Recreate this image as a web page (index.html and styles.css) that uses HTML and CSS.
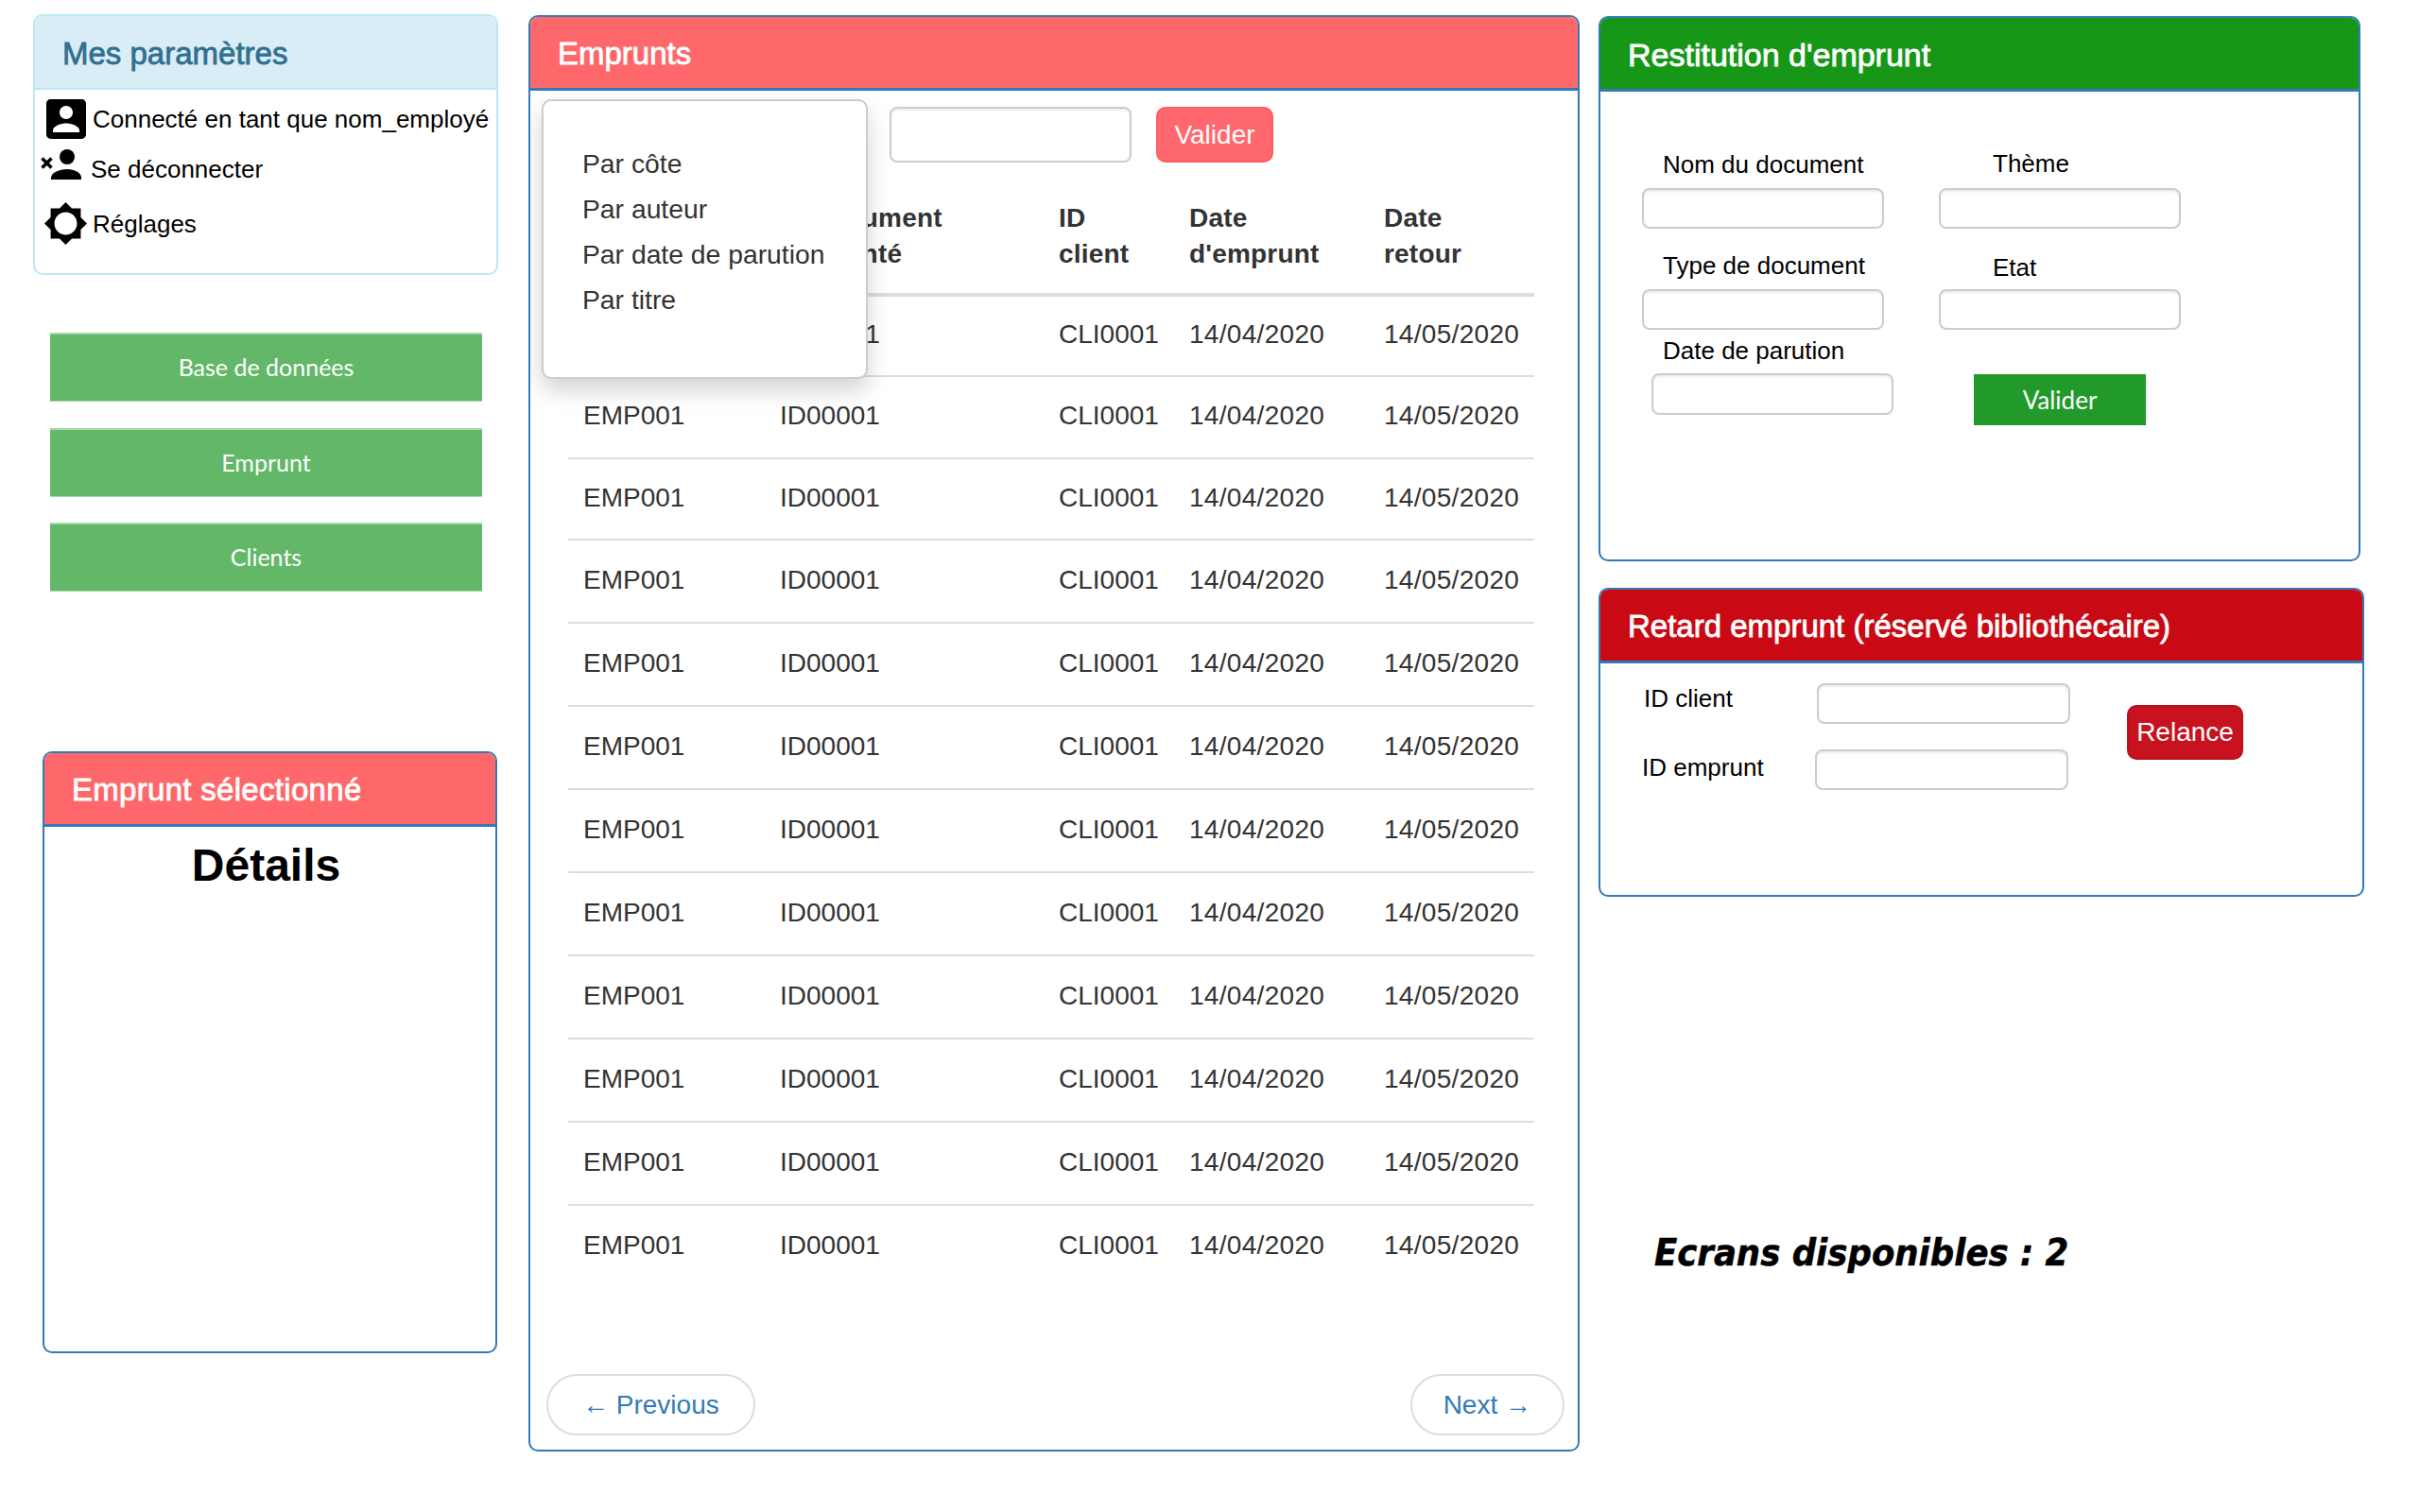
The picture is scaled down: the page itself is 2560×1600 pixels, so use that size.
FILE: index.html
```html
<!DOCTYPE html>
<html lang="fr">
<head>
<meta charset="utf-8">
<title>Emprunts</title>
<link rel="stylesheet" href="styles.css">
</head>
<body>
<div class="page">
  <aside class="col-left">
    <section class="params">
      <h2 class="params-title">Mes paramètres</h2>
      <div class="params-row row-user">
        <svg class="ic-user" viewBox="3 3 18 18" preserveAspectRatio="none"><path d="M3 5v14c0 1.1.89 2 2 2h14c1.1 0 2-.9 2-2V5c0-1.1-.9-2-2-2H5c-1.11 0-2 .9-2 2zm12 4c0 1.66-1.34 3-3 3s-3-1.34-3-3 1.34-3 3-3 3 1.34 3 3zm-9 8c0-2 4-3.1 6-3.1s6 1.1 6 3.1v1H6v-1z"/></svg>
        <span>Connecté en tant que nom_employé</span>
      </div>
      <div class="params-row row-logout">
        <svg class="ic-logout" viewBox="0 0 43 32"><circle cx="28" cy="8" r="8"/><path d="M11 32v-2c0-6 11-9 17-9s15 3 15 9v2z"/><path class="ic-x" d="M1.500 9.500l10 10M11.500 9.500l-10 10"/></svg>
        <span>Se déconnecter</span>
      </div>
      <div class="params-row row-settings">
        <svg class="ic-settings" viewBox="0.690 0.690 22.620 22.620"><path d="M20 15.310L23.310 12 20 8.690V4h-4.690L12 .69 8.690 4H4v4.690L.69 12 4 15.310V20h4.690L12 23.310 15.310 20H20v-4.690zM12 18c-3.310 0-6-2.690-6-6s2.690-6 6-6 6 2.690 6 6-2.690 6-6 6z"/></svg>
        <span>Réglages</span>
      </div>
    </section>
    <nav class="side-nav">
      <a class="nav-btn">Base de données</a>
      <a class="nav-btn">Emprunt</a>
      <a class="nav-btn">Clients</a>
    </nav>
    <section class="panel panel-detail">
      <h2 class="panel-heading head-coral head-detail">Emprunt sélectionné</h2>
      <h3 class="detail-title">Détails</h3>
    </section>
  </aside>

  <main class="panel panel-main">
    <h2 class="panel-heading head-coral">Emprunts</h2>
    <ul class="sort-menu">
      <li>Par côte</li>
      <li>Par auteur</li>
      <li>Par date de parution</li>
      <li>Par titre</li>
    </ul>
    <form class="search-row">
      <input class="input search-input" type="text">
      <button class="btn btn-coral" type="button">Valider</button>
    </form>
    <table class="loans">
      <colgroup><col class="c1"><col class="c2"><col class="c3"><col class="c4"><col class="c5"></colgroup>
      <thead>
        <tr><th>ID<br>emprunt</th><th>ID document<br>emprunté</th><th>ID<br>client</th><th>Date<br>d'emprunt</th><th>Date<br>retour</th></tr>
      </thead>
      <tbody>
        <tr><td>EMP001</td><td>ID00001</td><td>CLI0001</td><td>14/04/2020</td><td>14/05/2020</td></tr>
        <tr><td>EMP001</td><td>ID00001</td><td>CLI0001</td><td>14/04/2020</td><td>14/05/2020</td></tr>
        <tr><td>EMP001</td><td>ID00001</td><td>CLI0001</td><td>14/04/2020</td><td>14/05/2020</td></tr>
        <tr><td>EMP001</td><td>ID00001</td><td>CLI0001</td><td>14/04/2020</td><td>14/05/2020</td></tr>
        <tr><td>EMP001</td><td>ID00001</td><td>CLI0001</td><td>14/04/2020</td><td>14/05/2020</td></tr>
        <tr><td>EMP001</td><td>ID00001</td><td>CLI0001</td><td>14/04/2020</td><td>14/05/2020</td></tr>
        <tr><td>EMP001</td><td>ID00001</td><td>CLI0001</td><td>14/04/2020</td><td>14/05/2020</td></tr>
        <tr><td>EMP001</td><td>ID00001</td><td>CLI0001</td><td>14/04/2020</td><td>14/05/2020</td></tr>
        <tr><td>EMP001</td><td>ID00001</td><td>CLI0001</td><td>14/04/2020</td><td>14/05/2020</td></tr>
        <tr><td>EMP001</td><td>ID00001</td><td>CLI0001</td><td>14/04/2020</td><td>14/05/2020</td></tr>
        <tr><td>EMP001</td><td>ID00001</td><td>CLI0001</td><td>14/04/2020</td><td>14/05/2020</td></tr>
        <tr><td>EMP001</td><td>ID00001</td><td>CLI0001</td><td>14/04/2020</td><td>14/05/2020</td></tr>
      </tbody>
    </table>
    <div class="pager">
      <a class="pager-link pager-prev">← Previous</a>
      <a class="pager-link pager-next">Next →</a>
    </div>
  </main>

  <aside class="col-right">
    <section class="panel panel-return">
      <h2 class="panel-heading head-green">Restitution d'emprunt</h2>
      <form class="return-form">
        <div class="field f-name"><label>Nom du document</label><input class="input" type="text"></div>
        <div class="field f-theme"><label>Thème</label><input class="input" type="text"></div>
        <div class="field f-type"><label>Type de document</label><input class="input" type="text"></div>
        <div class="field f-state"><label>Etat</label><input class="input" type="text"></div>
        <div class="field f-date"><label>Date de parution</label><input class="input" type="text"></div>
        <button class="green-btn" type="button">Valider</button>
      </form>
    </section>
    <section class="panel panel-late">
      <h2 class="panel-heading head-red">Retard emprunt (réservé bibliothécaire)</h2>
      <form class="late-form">
        <div class="late-fields">
          <div class="late-row"><label>ID client</label><input class="input" type="text"></div>
          <div class="late-row late-row-2"><label>ID emprunt</label><input class="input" type="text"></div>
        </div>
        <button class="btn btn-red" type="button">Relance</button>
      </form>
    </section>
    <p class="screens">Ecrans disponibles : 2</p>
  </aside>
</div>
</body>
</html>
```

FILE: styles.css
```css
* { box-sizing: border-box; }
html, body { margin: 0; padding: 0; background: #fff; }
body { font-family: "Liberation Sans", Arial, sans-serif; color: #000; }
h2, h3, p, ul { margin: 0; padding: 0; }

.page { display: flex; align-items: flex-start; width: 2560px; height: 1600px; padding: 15px 0 0 35px; overflow: hidden; }
.col-left { width: 492px; flex: none; display: flex; flex-direction: column; }
.col-right { width: 810px; flex: none; margin: 2px 0 0 20px; display: flex; flex-direction: column; }

/* Settings */
.params { height: 276px; border: 2px solid #bce8f1; border-radius: 10px; overflow: hidden; }
.params-title { height: 78px; padding: 0 29px; background: #d9edf7; border-bottom: 2px solid #bce8f1; color: #31708f; font-size: 33px; font-weight: 400; line-height: 79px; -webkit-text-stroke: .8px #31708f; }
.params-row { display: flex; align-items: center; font-size: 26px; line-height: 30px; }
.row-user { height: 42px; margin: 10px 0 0 12px; gap: 7px; }
.row-logout { height: 32px; margin: 11px 0 0 6px; gap: 10px; }
.row-logout span { position: relative; top: 5px; }
.row-settings { height: 45px; margin: 24px 0 0 10px; gap: 6px; }
.ic-user { width: 42px; height: 42px; flex: none; }
.ic-logout { width: 43px; height: 32px; flex: none; }
.ic-x { fill: none; stroke: #000; stroke-width: 3.500; }
.ic-settings { width: 45px; height: 45px; flex: none; }

/* Side navigation */
.side-nav { margin: 61px 0 0 18px; display: flex; flex-direction: column; }
.nav-btn { display: block; width: 457px; height: 73px; background: #62b868; border-top: 2px solid #a6d8aa; border-bottom: 1px solid #a6d8aa; color: #fff; font-family: Lato, sans-serif; font-size: 25px; line-height: 69px; text-align: center; }
.nav-btn + .nav-btn { margin-top: 28px; }
.nav-btn:last-child { margin-top: 27px; }

/* Panels */
.panel { background: #fff; border: 2px solid #337ab7; border-radius: 10px; overflow: hidden; }
.panel-heading { height: 78px; padding: 0 29px; border-bottom: 3px solid #337ab7; color: #fff; font-size: 33px; font-weight: 400; line-height: 78px; -webkit-text-stroke: .8px #fff; white-space: nowrap; }
.head-coral { background: #ff686b; }
.head-detail { letter-spacing: .3px; }
.head-green { background: #169718; font-size: 34px; }
.head-red { background: #c90913; }
.panel-detail { width: 481px; height: 637px; margin: 169px 0 0 10px; }
.detail-title { margin-top: 11px; padding-right: 8px; font-size: 48px; line-height: 60px; text-align: center; font-weight: 700; }

/* Main panel */
.panel-main { position: relative; flex: none; width: 1112px; height: 1520px; margin: 1px 0 0 32px; }
.search-row { display: flex; height: 59px; margin-top: 17px; padding-left: 380px; gap: 26px; }
.input { display: block; height: 43px; padding: 0; background: #fff; border: 2px solid #ccc; border-radius: 8px; box-shadow: inset 0 2px 2px rgba(0,0,0,.075); }
.search-input { width: 256px; height: 59px; }
.btn { border-radius: 10px; color: #fff; font-family: "Liberation Sans", Arial, sans-serif; font-size: 28px; padding: 0; }
.btn-coral { width: 124px; height: 59px; background: #ff686e; border: 2px solid #ff5a60; }
.btn-red { width: 123px; height: 58px; margin: 23px 0 0 56px; background: #c81220; border: 2px solid #bb0f1c; }

.sort-menu { position: absolute; left: 12px; top: 87px; z-index: 2; width: 345px; height: 296px; padding: 42px 0 0 41px; background: #fff; border: 2px solid #ccc; border-radius: 10px; box-shadow: 0 12px 24px rgba(0,0,0,.175); list-style: none; color: #333; font-size: 28.300px; line-height: 48px; }

.loans { width: 1022px; margin: 19px 0 0 40px; border-collapse: collapse; table-layout: fixed; color: #333; font-size: 28px; }
.c1 { width: 208px; } .c2 { width: 295px; } .c3 { width: 138px; } .c4 { width: 206px; } .c5 { width: 175px; }
.loans th { padding: 21px 16px 22px; border-bottom: 4px solid #ddd; font-weight: 700; letter-spacing: .2px; line-height: 38px; text-align: left; }
.loans td { height: 88px; padding: 0 16px 3px; border-top: 2px solid #ddd; line-height: 40px; white-space: nowrap; }
.loans td:nth-child(n+4) { letter-spacing: .3px; }
.loans tbody tr:first-child td { height: 86px; border-top: 0; }
.loans tbody tr:nth-child(2) td { height: 87px; }
.loans tbody tr:nth-child(3) td { height: 86px; }

.pager { display: flex; justify-content: space-between; margin-top: 91px; padding: 0 14px 0 17px; }
.pager-link { display: block; height: 65px; padding: 0 36px; background: #fff; border: 2px solid #ddd; border-radius: 33px; color: #337ab7; font-size: 28px; line-height: 61px; }
.pager-next { padding: 0 33px; }

/* Restitution */
.panel-return { width: 806px; height: 577px; }
.return-form { display: grid; grid-template-columns: 314px 1fr; padding: 61px 0 0 44px; }
.field label { display: block; height: 30px; font-size: 26px; line-height: 30px; }
.field .input { width: 256px; }
.f-name label { margin: 1px 0 10px 22px; }
.f-theme label { margin: 0 0 11px 57px; }
.f-type { margin-top: 24px; }
.f-type label { margin: 0 0 10px 22px; }
.f-state { margin-top: 26px; }
.f-state label { margin: 0 0 8px 57px; }
.f-date { margin: 7px 0 0 10px; }
.f-date label { margin: 0 0 9px 12px; }
.f-date .input { height: 44px; }
.green-btn { align-self: start; width: 182px; height: 54px; margin: 47px 0 0 37px; padding: 0; background: #229a2a; border: 0; color: #fff; font-family: Lato, sans-serif; font-size: 26px; }

/* Retard */
.panel-late { margin-top: 28px; height: 327px; }
.late-form { display: flex; align-items: flex-start; padding: 21px 0 0 46px; }
.late-row { display: flex; width: 455px; font-size: 26px; line-height: 30px; }
.late-row label { width: 183px; flex: none; padding-top: 1px; }
.late-row .input { width: 268px; }
.late-row-2 { margin: 27px 0 0 -2px; }
.late-row-2 label { padding-top: 4px; }

.screens { margin: 350px 0 0 59px; font-family: "DejaVu Sans", sans-serif; font-size: 39.500px; font-weight: 700; font-style: italic; font-stretch: condensed; line-height: 53px; white-space: nowrap; -webkit-text-stroke: .5px #000; }
```
